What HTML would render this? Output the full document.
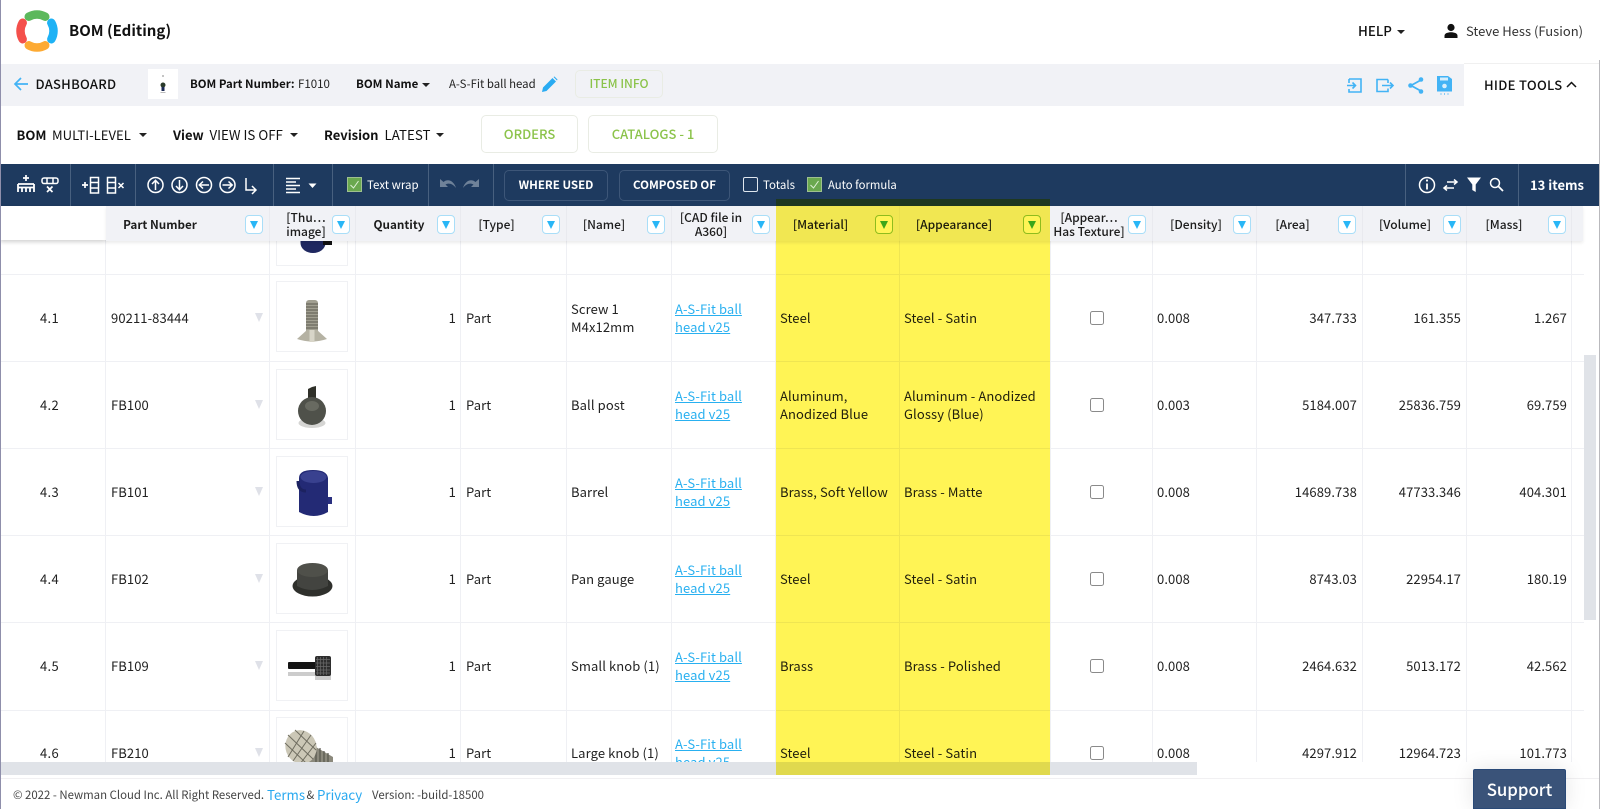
<!DOCTYPE html>
<html><head><meta charset="utf-8"><title>BOM (Editing)</title>
<style>
html,body{margin:0;padding:0;width:1600px;height:809px;overflow:hidden;background:#fff}
body{position:relative;font-family:"Noto Sans CJK JP","Liberation Sans",sans-serif;color:#222;font-size:13px}
.a{position:absolute}
.t{position:absolute;white-space:nowrap;line-height:20px;height:20px}
.b{font-weight:700}
.m{font-weight:500}
.w{color:#fff}
.c{position:absolute;width:0;height:0;border-left:4px solid transparent;border-right:4px solid transparent;border-top:4.5px solid #222}
.sep{position:absolute;top:164px;height:42px;width:1px;background:#48607f}
.btn{position:absolute;border:1px solid #e9ece4;border-radius:5px;color:#8bc34a;text-align:center;box-sizing:border-box;font-weight:500}
.nb{position:absolute;top:170px;height:31px;border:1px solid #3d5678;border-radius:5px;box-sizing:border-box;color:#fff;text-align:center;font-size:11.500px;font-weight:700;line-height:29px}
.cb{position:absolute;width:15px;height:15px;top:177px;box-sizing:border-box}
.hd{position:absolute;top:208px;height:34px;line-height:14.500px;font-size:12px;font-weight:500;text-align:center;display:flex;align-items:center;justify-content:center;color:#1c1c1c;white-space:nowrap}
.hd.s{font-weight:700;font-size:11.700px}
.f{position:absolute;top:215px;width:18px;height:19px;box-sizing:border-box;background:#fff;border:1px solid #a9def8;border-radius:4px}
.f:after{content:"";position:absolute;left:4px;top:5px;border-left:4px solid transparent;border-right:4px solid transparent;border-top:8px solid #29b6f6}
.f.g{background:#fff;border-color:#8fc555}
.f.g:after{border-top-color:#3cae49}
.vl{position:absolute;top:206px;height:556px;width:1px;background:#eff0f4}
.hl{position:absolute;left:1px;width:1583px;height:1px;background:#eff0f4}
.idx{position:absolute;left:-3px;width:105px;text-align:center;line-height:20px;letter-spacing:.3px}
.tri{position:absolute;left:255px;border-left:4.500px solid transparent;border-right:4.500px solid transparent;border-top:9px solid #dfe1e8}
.box{position:absolute;left:276px;width:72px;height:71px;box-sizing:border-box;border:1px solid #f0f1f4;background:#fff}
.r{position:absolute;text-align:right;white-space:nowrap;line-height:20px;letter-spacing:.1px}
.l{position:absolute;white-space:nowrap;line-height:18px;letter-spacing:.1px}
.lk{color:#29b0f0;text-decoration:underline}
.ck{position:absolute;left:1090px;width:14px;height:14px;box-sizing:border-box;border:1.300px solid #8a8a8a;border-radius:2.500px;background:#fff}
</style></head><body>

<!-- top header -->
<svg class="a" style="left:14px;top:8px" width="46" height="46" viewBox="0 0 46 46">
<g fill="none" stroke-width="8.500" stroke-linecap="round">
<path d="M14.750 8.700A16.500 16.500 0 0 1 31.250 8.700" stroke="#5cb85c"/>
<path d="M37.300 14.750A16.500 16.500 0 0 1 37.300 31.250" stroke="#1eb2f5"/>
<path d="M31.250 37.300A16.500 16.500 0 0 1 14.750 37.300" stroke="#fdaa33"/>
<path d="M8.700 31.250A16.500 16.500 0 0 1 8.700 14.750" stroke="#f4504b"/>
</g></svg>
<div class="t b" style="left:69px;top:21px;font-size:15px;color:#111">BOM (Editing)</div>
<div class="t m" style="left:1358px;top:21px;font-size:13.300px;color:#111">HELP</div>
<div class="c" style="left:1397px;top:30px"></div>
<svg class="a" style="left:1443px;top:23px" width="16" height="16" viewBox="0 0 16 16"><circle cx="8" cy="4.500" r="3.600" fill="#111"/><path d="M1.500 15v-2.300C1.500 10.300 5 9.300 8 9.300s6.500 1 6.500 3.400V15z" fill="#111"/></svg>
<div class="t" style="left:1466px;top:21px;font-size:13px;color:#333">Steve Hess (Fusion)</div>

<!-- gray bar -->
<div class="a" style="left:0;top:63.500px;width:1464px;height:42px;background:#f1f2f6"></div>
<div class="a" style="left:1464px;top:63px;width:136px;height:1px;background:#f0f0f0"></div>
<svg class="a" style="left:13px;top:76px" width="16" height="16" viewBox="0 0 16 16"><path d="M8 2 2 8l6 6M2 8h13" fill="none" stroke="#42b3f5" stroke-width="1.700"/></svg>
<div class="t m" style="left:35.500px;top:74px;font-size:13px;color:#111;letter-spacing:.25px">DASHBOARD</div>
<div class="a" style="left:148px;top:69px;width:30px;height:30px;background:#fff"></div>
<svg class="a" style="left:148px;top:69px" width="30" height="30" viewBox="0 0 30 30"><rect x="14.500" y="6" width="1" height="2" fill="#888"/><circle cx="15" cy="16" r="2.500" fill="#2a3a2a"/><rect x="13.500" y="18" width="3" height="4" fill="#1c2a55"/><rect x="12.500" y="23" width="5" height="1" fill="#bbb"/></svg>
<div class="t b" style="left:190px;top:74px;font-size:11.400px;color:#111">BOM Part Number:</div>
<div class="t" style="left:298px;top:74px;font-size:11.500px">F1010</div>
<div class="t b" style="left:356px;top:74px;font-size:11.500px;color:#111">BOM Name</div>
<div class="c" style="left:422px;top:83px"></div>
<div class="t" style="left:449px;top:74px;font-size:11.400px">A-S-Fit ball head</div>
<svg class="a" style="left:541px;top:76px" width="17" height="17" viewBox="0 0 17 17"><path d="M1 16l1-4.500L11.500 2l3.500 3.500L5.500 15z M12.500 1l1-.5 3 3-.5 1z" fill="#29abf2"/></svg>
<div class="btn" style="left:575px;top:70px;width:88px;height:28px;line-height:26px;font-size:12px">ITEM INFO</div>
<svg class="a" style="left:1346px;top:76px" width="110" height="20" viewBox="0 0 110 20" fill="none" stroke="#42b3f5" stroke-width="1.600">
<path d="M3 3h12v13H3v-3M3 7V3M1 9.500h8M6.500 6.500l3 3-3 3"/>
<path d="M42 3.500H31v12h11v-3M42 7V3.500M36 9.500h11M44 6.500l3 3-3 3"/>
<path d="M75 4 65 9.500 75 15" stroke-width="1.800"/><circle cx="75" cy="3.500" r="2.300" fill="#42b3f5" stroke="none"/><circle cx="64.500" cy="9.500" r="2.300" fill="#42b3f5" stroke="none"/><circle cx="75" cy="15.500" r="2.300" fill="#42b3f5" stroke="none"/>
<path d="M91 0h11l4 3v12.500H91z" fill="#42b3f5" stroke="none"/><rect x="94" y="1.500" width="8" height="3" fill="#d6eefc" stroke="none"/><circle cx="98.500" cy="10" r="2.300" fill="#d6eefc" stroke="none"/>
<path d="M94.500 18h1M98 18h1M101.500 18h1" stroke-width="1.300"/>
</svg>
<div class="t m" style="left:1484px;top:75px;font-size:13px;color:#111;letter-spacing:.3px">HIDE TOOLS</div>
<svg class="a" style="left:1566px;top:80px" width="11" height="9" viewBox="0 0 11 9"><path d="M1 7l4.500-4.500L10 7" fill="none" stroke="#111" stroke-width="1.500"/></svg>

<!-- selector row -->
<div class="t b" style="left:16.500px;top:124.500px;font-size:13px;color:#111">BOM</div>
<div class="t" style="left:52px;top:124.500px;font-size:13.100px;color:#111">MULTI-LEVEL</div>
<div class="c" style="left:139px;top:133px"></div>
<div class="t b" style="left:173px;top:124.500px;font-size:13px;color:#111">View</div>
<div class="t" style="left:209.500px;top:124.500px;font-size:13.300px;color:#111">VIEW IS OFF</div>
<div class="c" style="left:290px;top:133px"></div>
<div class="t b" style="left:324px;top:124.500px;font-size:13px;color:#111">Revision</div>
<div class="t" style="left:384.500px;top:124.500px;font-size:13.300px;color:#111">LATEST</div>
<div class="c" style="left:436px;top:133px"></div>
<div class="btn" style="left:481px;top:115px;width:97px;height:38px;line-height:36px;font-size:13px">ORDERS</div>
<div class="btn" style="left:588px;top:115px;width:130px;height:38px;line-height:36px;font-size:13px">CATALOGS - 1</div>

<!-- toolbar -->
<div class="a" style="left:0;top:164px;width:1600px;height:42px;background:#1e3a5f"></div>
<div class="sep" style="left:70px"></div><div class="sep" style="left:135px"></div><div class="sep" style="left:273px"></div><div class="sep" style="left:332px"></div><div class="sep" style="left:428px"></div><div class="sep" style="left:493px"></div><div class="sep" style="left:1405px"></div><div class="sep" style="left:1518px"></div>
<svg class="a" style="left:0;top:164px" width="330" height="42" viewBox="0 0 330 42" fill="none" stroke="#fff" stroke-width="1.500">
<path d="M26 11v6M23 14h6" stroke-width="1.700"/><path d="M18 20h16M18 20v8M34 20v8M18 23.500h16M22 23.500v4.500M26 23.500v4.500M30 23.500v4.500" stroke-width="1.800"/>
<rect x="42" y="14" width="16" height="5.500" rx="2" stroke-width="1.500"/><path d="M47 14v5.500M53 14v5.500"/><path d="M47 22.500l5.500 5.500M52.500 22.500 47 28" stroke-width="1.700"/>
<path d="M82 21h6M85 18v6" stroke-width="1.700"/><rect x="90.500" y="13.500" width="8" height="15.500"/><path d="M90.500 18.500h8M90.500 24h8"/>
<rect x="107.500" y="13.500" width="8" height="15.500"/><path d="M107.500 18.500h8M107.500 24h8"/><path d="M118.500 19l5 5M123.500 19l-5 5" stroke-width="1.500"/>
<circle cx="155.500" cy="21" r="7.500"/><path d="M155.500 26v-9.500M152 20l3.500-3.700 3.500 3.700"/>
<circle cx="179.500" cy="21" r="7.500"/><path d="M179.500 16v9.500M176 22l3.500 3.700 3.500-3.700"/>
<circle cx="204" cy="21" r="7.500"/><path d="M209 21H199.500M203 17.500 199.300 21l3.700 3.500"/>
<circle cx="227.500" cy="21" r="7.500"/><path d="M222.500 21h9.500M228.500 17.500l3.700 3.500-3.700 3.500"/>
<path d="M246 14v12h9M252 22l4 4-4 4"/>
<path d="M286 14.500h14M286 18h10M286 21.500h14M286 25h10M286 28.500h14" stroke-width="1.400"/>
<path d="M308.500 19.500h8l-4 4.500z" fill="#fff" stroke="none"/>
</svg>
<div class="cb" style="left:347px;background:#6aa84f;border:1px solid #9fc08f"><svg width="13" height="13" viewBox="0 0 13 13" style="display:block"><path d="M2.500 7l3 3 5-7" fill="none" stroke="#dff0d8" stroke-width="1"/></svg></div>
<div class="t w" style="left:367px;top:175px;font-size:11.500px">Text wrap</div>
<svg class="a" style="left:438px;top:177px" width="46" height="16" viewBox="0 0 46 16" fill="#6f8299"><path d="M2 2v8h8L7.500 7.500C11 5.500 15 7 18 11 16 4 10 1 5.500 5z"/><path d="M41 2v8h-8l2.500-2.500C32 5.500 28 7 25 11 27 4 33 1 37.500 5z"/></svg>
<div class="nb" style="left:504px;width:104px">WHERE USED</div>
<div class="nb" style="left:619px;width:111px">COMPOSED OF</div>
<div class="cb" style="left:743px;border:1.300px solid #dfe6ee;border-radius:2px"></div>
<div class="t w" style="left:763px;top:175px;font-size:11.500px">Totals</div>
<div class="cb" style="left:807px;background:#6aa84f;border:1px solid #9fc08f"><svg width="13" height="13" viewBox="0 0 13 13" style="display:block"><path d="M2.500 7l3 3 5-7" fill="none" stroke="#dff0d8" stroke-width="1"/></svg></div>
<div class="t w" style="left:828px;top:175px;font-size:11.300px">Auto formula</div>
<svg class="a" style="left:1410px;top:164px" width="100" height="42" viewBox="0 0 100 42" fill="none" stroke="#fff">
<circle cx="17" cy="21" r="7.500" stroke-width="1.500"/><path d="M17 19.500v6" stroke-width="1.800"/><circle cx="17" cy="16.500" r="1.100" fill="#fff" stroke="none"/>
<path d="M34 24h10M37 21.500 34 24l3 2.500M37 18h10M44 15.500l3 2.500-3 2.500" stroke-width="1.500"/>
<path d="M57 13.500h14l-5.300 7v7.500l-3.400-2v-5.500z" fill="#fff" stroke="none"/>
<circle cx="85" cy="19" r="4.500" stroke-width="1.500"/><path d="M88.500 22.500l4.500 4.500" stroke-width="1.800"/>
</svg>
<div class="t b w" style="left:1530px;top:175px;font-size:13px">13 items</div>

<!-- table body -->
<div class="a" style="left:0;top:240px;width:1600px;height:522px;overflow:hidden;background:#fff">
<div style="position:absolute;left:0;top:-240px;width:1600px;height:809px">

<div class="box" style="top:195px"></div>
<svg class="a" style="left:276px;top:235px" width="72" height="20" viewBox="0 0 72 20"><ellipse cx="37" cy="8" rx="12.500" ry="10" fill="#1f2860"/><rect x="24.500" y="0" width="25" height="8" fill="#1f2860"/><rect x="47" y="0" width="9" height="10" fill="#111"/></svg>

<div class="hl" style="top:274px"></div><div class="hl" style="top:361px"></div><div class="hl" style="top:448px"></div><div class="hl" style="top:535px"></div><div class="hl" style="top:622px"></div><div class="hl" style="top:710px"></div>
<div class="vl" style="left:105px"></div><div class="vl" style="left:269px"></div><div class="vl" style="left:355px"></div><div class="vl" style="left:460px"></div><div class="vl" style="left:566px"></div><div class="vl" style="left:671px"></div><div class="vl" style="left:775px"></div><div class="vl" style="left:899px"></div><div class="vl" style="left:1050px"></div><div class="vl" style="left:1152px"></div><div class="vl" style="left:1256px"></div><div class="vl" style="left:1362px"></div><div class="vl" style="left:1466px"></div><div class="vl" style="left:1571px"></div>

<!-- row 4.1 -->
<div class="idx" style="top:308px">4.1</div><div class="r" style="left:111px;top:308px">90211-83444</div><div class="tri" style="top:313px"></div>
<div class="box" style="top:281px"></div>
<svg class="a" style="left:276px;top:281px" width="72" height="71" viewBox="0 0 72 71"><rect x="30" y="19" width="12" height="33" rx="3" fill="#a19f91"/><path d="M30 23h12M30 26h12M30 29h12M30 32h12M30 35h12M30 38h12M30 41h12M30 44h12M30 47h12" stroke="#5c5a50" stroke-width="1"/><path d="M31 49h10l10 9q-15 5-30 0z" fill="#b5b2a3"/><path d="M36 49v12" stroke="#d8d5c8" stroke-width="5"/></svg>
<div class="r" style="left:356px;width:100px;top:308px">1</div><div class="r" style="left:466px;top:308px">Part</div>
<div class="l" style="left:571px;top:300px">Screw 1<br>M4x12mm</div>
<div class="l lk" style="left:675px;top:300px">A-S-Fit ball<br>head v25</div>
<div class="r" style="left:780px;top:308px">Steel</div><div class="r" style="left:904px;top:308px">Steel - Satin</div>
<div class="ck" style="top:311px"></div><div class="r" style="left:1157px;top:308px">0.008</div>
<div class="r" style="right:243px;top:308px">347.733</div><div class="r" style="right:139px;top:308px">161.355</div><div class="r" style="right:33px;top:308px">1.267</div>

<!-- row 4.2 -->
<div class="idx" style="top:395px">4.2</div><div class="r" style="left:111px;top:395px">FB100</div><div class="tri" style="top:400px"></div>
<div class="box" style="top:369px"></div>
<svg class="a" style="left:276px;top:369px" width="72" height="71" viewBox="0 0 72 71"><ellipse cx="36" cy="54" rx="13.500" ry="5" fill="#d5d5d3"/><path d="M32 20l4-2 4-1v16h-8z" fill="#2f3029"/><circle cx="36" cy="42" r="14" fill="#4f514a"/><ellipse cx="36" cy="37" rx="7" ry="5" fill="#7a7c72" opacity=".6"/></svg>
<div class="r" style="left:356px;width:100px;top:395px">1</div><div class="r" style="left:466px;top:395px">Part</div>
<div class="l" style="left:571px;top:395px;line-height:20px">Ball post</div>
<div class="l lk" style="left:675px;top:387px">A-S-Fit ball<br>head v25</div>
<div class="l" style="left:780px;top:387px">Aluminum,<br>Anodized Blue</div><div class="l" style="left:904px;top:387px">Aluminum - Anodized<br>Glossy (Blue)</div>
<div class="ck" style="top:398px"></div><div class="r" style="left:1157px;top:395px">0.003</div>
<div class="r" style="right:243px;top:395px">5184.007</div><div class="r" style="right:139px;top:395px">25836.759</div><div class="r" style="right:33px;top:395px">69.759</div>

<!-- row 4.3 -->
<div class="idx" style="top:482px">4.3</div><div class="r" style="left:111px;top:482px">FB101</div><div class="tri" style="top:487px"></div>
<div class="box" style="top:456px"></div>
<svg class="a" style="left:276px;top:456px" width="72" height="71" viewBox="0 0 72 71"><rect x="51" y="41" width="5" height="7" fill="#2a3080"/><path d="M23 22q0-8 14-8t15 8v34q-14 8-29 0z" fill="#232a75"/><ellipse cx="37.500" cy="21" rx="13" ry="6" fill="#39418f"/><path d="M22 25q0 10 8 10" fill="none" stroke="#1c2260" stroke-width="3"/></svg>
<div class="r" style="left:356px;width:100px;top:482px">1</div><div class="r" style="left:466px;top:482px">Part</div>
<div class="l" style="left:571px;top:482px;line-height:20px">Barrel</div>
<div class="l lk" style="left:675px;top:474px">A-S-Fit ball<br>head v25</div>
<div class="r" style="left:780px;top:482px">Brass, Soft Yellow</div><div class="r" style="left:904px;top:482px">Brass - Matte</div>
<div class="ck" style="top:485px"></div><div class="r" style="left:1157px;top:482px">0.008</div>
<div class="r" style="right:243px;top:482px">14689.738</div><div class="r" style="right:139px;top:482px">47733.346</div><div class="r" style="right:33px;top:482px">404.301</div>

<!-- row 4.4 -->
<div class="idx" style="top:569px">4.4</div><div class="r" style="left:111px;top:569px">FB102</div><div class="tri" style="top:574px"></div>
<div class="box" style="top:543px"></div>
<svg class="a" style="left:276px;top:543px" width="72" height="71" viewBox="0 0 72 71"><ellipse cx="36.500" cy="43" rx="20" ry="10.500" fill="#2f302c"/><path d="M21 27v16q15 8 31 0V27z" fill="#434440"/><ellipse cx="36.500" cy="27" rx="15.500" ry="7" fill="#4f504a"/></svg>
<div class="r" style="left:356px;width:100px;top:569px">1</div><div class="r" style="left:466px;top:569px">Part</div>
<div class="l" style="left:571px;top:569px;line-height:20px">Pan gauge</div>
<div class="l lk" style="left:675px;top:561px">A-S-Fit ball<br>head v25</div>
<div class="r" style="left:780px;top:569px">Steel</div><div class="r" style="left:904px;top:569px">Steel - Satin</div>
<div class="ck" style="top:572px"></div><div class="r" style="left:1157px;top:569px">0.008</div>
<div class="r" style="right:243px;top:569px">8743.03</div><div class="r" style="right:139px;top:569px">22954.17</div><div class="r" style="right:33px;top:569px">180.19</div>

<!-- row 4.5 -->
<div class="idx" style="top:656px">4.5</div><div class="r" style="left:111px;top:656px">FB109</div><div class="tri" style="top:661px"></div>
<div class="box" style="top:630px"></div>
<svg class="a" style="left:276px;top:630px" width="72" height="71" viewBox="0 0 72 71"><rect x="12" y="42" width="28" height="4" fill="#ccc"/><rect x="39" y="44" width="16" height="6" fill="#ccc"/><rect x="12" y="32" width="28" height="7" rx="1" fill="#141414"/><rect x="39" y="26" width="16" height="20" rx="2" fill="#2e2e2e"/><path d="M41.500 27v18M44.500 27v18M47.500 27v18M50.500 27v18M40 29.500h14M40 33h14M40 36.500h14M40 40h14M40 43h14" stroke="#6a6a6a" stroke-width=".7"/></svg>
<div class="r" style="left:356px;width:100px;top:656px">1</div><div class="r" style="left:466px;top:656px">Part</div>
<div class="l" style="left:571px;top:656px;line-height:20px">Small knob (1)</div>
<div class="l lk" style="left:675px;top:648px">A-S-Fit ball<br>head v25</div>
<div class="r" style="left:780px;top:656px">Brass</div><div class="r" style="left:904px;top:656px">Brass - Polished</div>
<div class="ck" style="top:659px"></div><div class="r" style="left:1157px;top:656px">0.008</div>
<div class="r" style="right:243px;top:656px">2464.632</div><div class="r" style="right:139px;top:656px">5013.172</div><div class="r" style="right:33px;top:656px">42.562</div>

<!-- row 4.6 -->
<div class="idx" style="top:743px">4.6</div><div class="r" style="left:111px;top:743px">FB210</div><div class="tri" style="top:748px"></div>
<div class="box" style="top:717px"></div>
<svg class="a" style="left:276px;top:717px" width="72" height="71" viewBox="0 0 72 71"><path d="M33 26l24 14v8H33z" fill="#8b897c"/><path d="M40 29v17M44 31v15M48 34v12M52 36v10" stroke="#56554c" stroke-width="1.200"/><ellipse cx="25" cy="30" rx="15.500" ry="17" fill="#cbc7b6" transform="rotate(-20 25 30)"/><path d="M12 40 28 14M17 44 35 18M24 47 40 26M9 26 30 46M12 18 37 42M19 13 40 33" stroke="#6f6d60" stroke-width="1"/></svg>
<div class="r" style="left:356px;width:100px;top:743px">1</div><div class="r" style="left:466px;top:743px">Part</div>
<div class="l" style="left:571px;top:743px;line-height:20px">Large knob (1)</div>
<div class="l lk" style="left:675px;top:735px">A-S-Fit ball<br>head v25</div>
<div class="r" style="left:780px;top:743px">Steel</div><div class="r" style="left:904px;top:743px">Steel - Satin</div>
<div class="ck" style="top:746px"></div><div class="r" style="left:1157px;top:743px">0.008</div>
<div class="r" style="right:243px;top:743px">4297.912</div><div class="r" style="right:139px;top:743px">12964.723</div><div class="r" style="right:33px;top:743px">101.773</div>

</div></div>

<!-- table header -->
<div class="a" style="left:0;top:206px;width:106px;height:34px;background:#fff;box-shadow:0 2px 4px rgba(0,0,0,.18)"></div>
<div class="a" style="left:106px;top:206px;width:1477px;height:35px;background:#f1f2f6;box-shadow:0 2px 3px rgba(0,0,0,.08)"></div>
<div class="a" style="left:269px;top:206px;width:1px;height:35px;background:#e9eaef"></div><div class="a" style="left:355px;top:206px;width:1px;height:35px;background:#e9eaef"></div><div class="a" style="left:460px;top:206px;width:1px;height:35px;background:#e9eaef"></div><div class="a" style="left:566px;top:206px;width:1px;height:35px;background:#e9eaef"></div><div class="a" style="left:671px;top:206px;width:1px;height:35px;background:#e9eaef"></div><div class="a" style="left:899px;top:206px;width:1px;height:35px;background:#e9eaef"></div><div class="a" style="left:1152px;top:206px;width:1px;height:35px;background:#e9eaef"></div><div class="a" style="left:1256px;top:206px;width:1px;height:35px;background:#e9eaef"></div><div class="a" style="left:1362px;top:206px;width:1px;height:35px;background:#e9eaef"></div><div class="a" style="left:1466px;top:206px;width:1px;height:35px;background:#e9eaef"></div><div class="a" style="left:1571px;top:206px;width:1px;height:35px;background:#e9eaef"></div>

<div class="hd s" style="left:110px;width:100px">Part Number</div><div class="f" style="left:245px"></div>
<div class="hd" style="left:273px;width:66px">[Thu…<br>image]</div><div class="f" style="left:332px"></div>
<div class="hd s" style="left:374px;width:50px">Quantity</div><div class="f" style="left:437px"></div>
<div class="hd" style="left:479px;width:35px">[Type]</div><div class="f" style="left:542px"></div>
<div class="hd" style="left:584px;width:40px">[Name]</div><div class="f" style="left:647px"></div>
<div class="hd" style="left:678px;width:66px">[CAD file in<br>A360]</div><div class="f" style="left:752px"></div>
<div class="hd" style="left:793px;width:55px">[Material]</div><div class="f g" style="left:875px"></div>
<div class="hd" style="left:917px;width:74px">[Appearance]</div><div class="f g" style="left:1023px"></div>
<div class="hd" style="left:1051px;width:76px">[Appear…<br>Has Texture]</div><div class="f" style="left:1128px"></div>
<div class="hd" style="left:1170px;width:52px">[Density]</div><div class="f" style="left:1233px"></div>
<div class="hd" style="left:1276px;width:33px">[Area]</div><div class="f" style="left:1338px"></div>
<div class="hd" style="left:1380px;width:50px">[Volume]</div><div class="f" style="left:1443px"></div>
<div class="hd" style="left:1486px;width:36px">[Mass]</div><div class="f" style="left:1548px"></div>

<!-- scrollbars -->
<div class="a" style="left:1px;top:762px;width:1196px;height:13px;background:#e0e3e8"></div>
<div class="a" style="left:1584px;top:355px;width:12px;height:265px;background:#e0e3e8"></div>
<div class="a" style="left:1599px;top:60px;width:1px;height:749px;background:#b9b9bd"></div>
<div class="a" style="left:0;top:0;width:1px;height:809px;background:#8f8fab"></div>

<!-- footer -->
<div class="a" style="left:1px;top:778px;width:1598px;height:1px;background:#f1f0f2"></div>
<div class="t" style="left:13px;top:785px;font-size:11.400px;color:#444">© 2022 - Newman Cloud Inc. All Right Reserved.</div>
<div class="t" style="left:267px;top:785px;font-size:13.300px;color:#29a9f0">Terms</div>
<div class="t" style="left:306.500px;top:785px;font-size:11.400px;color:#444">&amp;</div>
<div class="t" style="left:317px;top:785px;font-size:13.300px;color:#29a9f0">Privacy</div>
<div class="t" style="left:372px;top:785px;font-size:11.400px;color:#444">Version: -build-18500</div>
<div class="a" style="left:1473px;top:769px;width:93px;height:40px;box-sizing:border-box;background:#3a5379;border:1px solid #2a4a78;border-radius:2px 2px 0 0;color:#fff;text-align:center;font-size:16.800px;font-weight:500;line-height:38px;box-shadow:0 0 22px rgba(0,0,0,.1)">Support</div>

<!-- yellow highlight -->
<div class="a" style="left:776px;top:199px;width:274px;height:576px;background:#fff455;mix-blend-mode:multiply"></div>

</body></html>
